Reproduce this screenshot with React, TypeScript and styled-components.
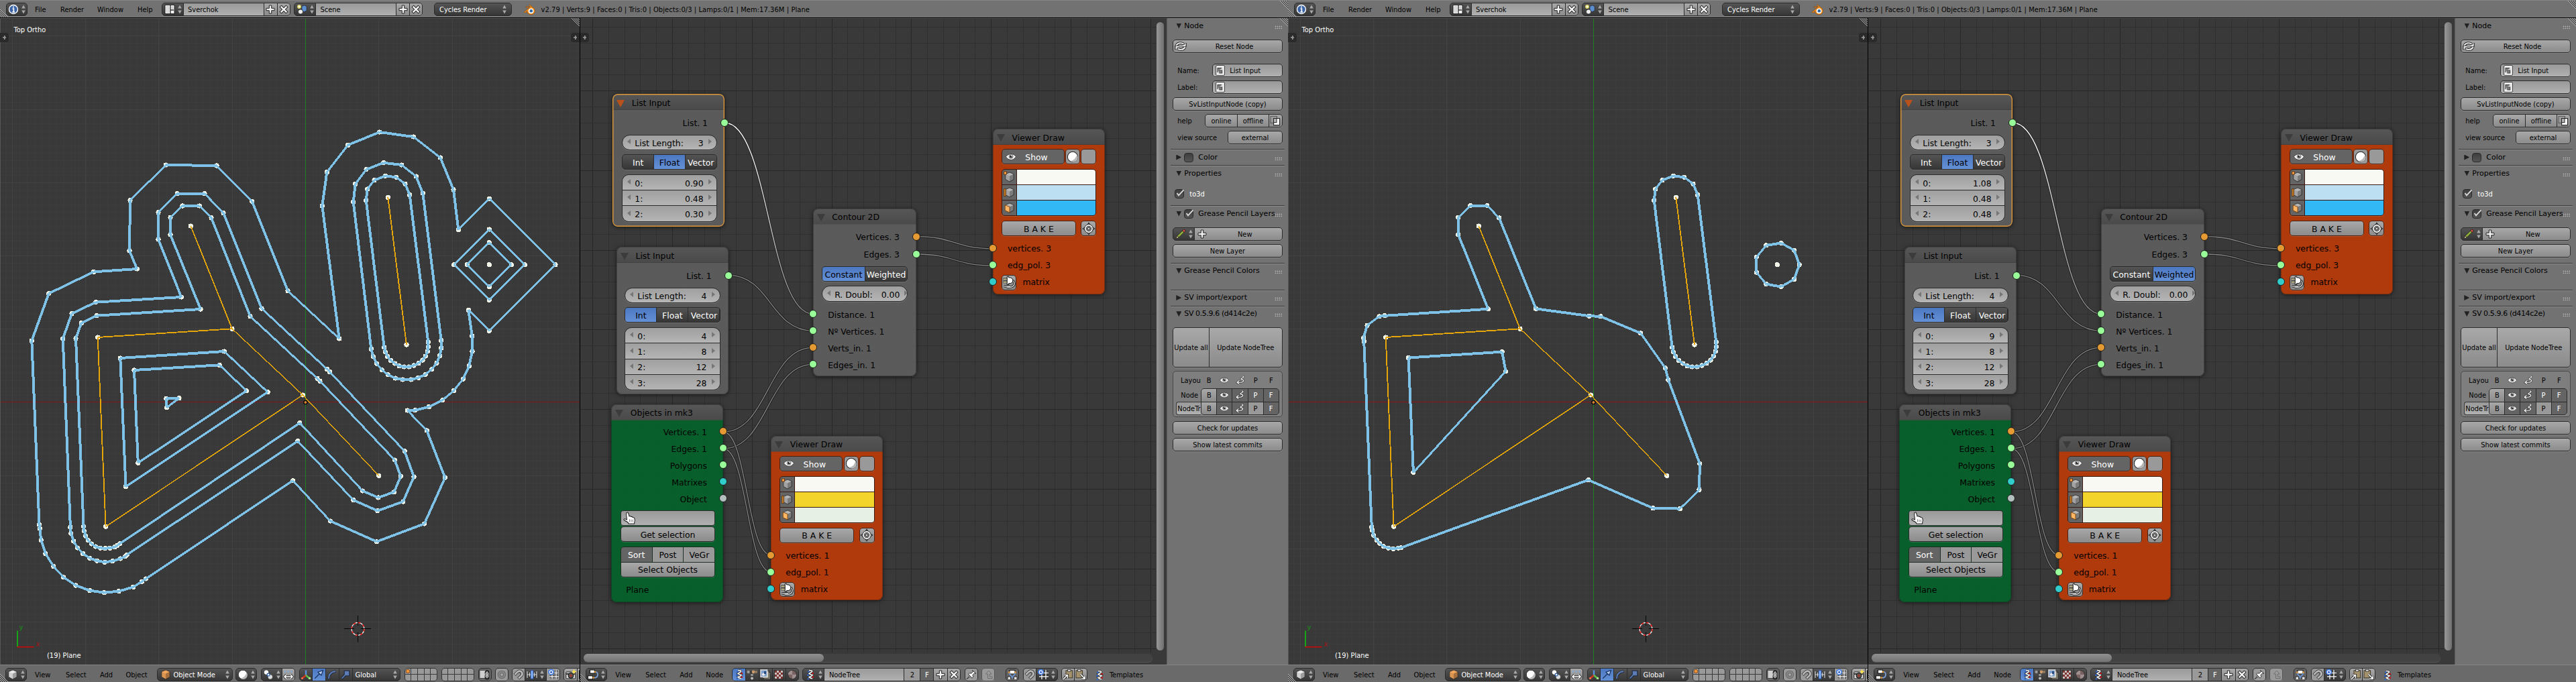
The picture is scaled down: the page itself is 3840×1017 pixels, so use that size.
import React from "react";
import styled, { createGlobalStyle, css } from "styled-components";

/* ---------- theme ---------- */

const shade = {
  dark: "linear-gradient(#545454, #363636)",
  tool: "linear-gradient(#a8a8a8, #8b8b8b)",
  flat: "#999999",
  field: "linear-gradient(#999999, #b1b1b1)",
  pressed: "#646464",
  active: "linear-gradient(#4c78c2, #6490d6)",
};
type Tone = keyof typeof shade;
const lightText = (t: Tone) => t === "dark" || t === "pressed";

const GlobalStyle = createGlobalStyle`
  * { box-sizing: border-box; }
  body { margin: 0; background: #393939; overflow: hidden; }
`;

const uiFont = css`
  font-family: "DejaVu Sans Condensed", "DejaVu Sans", sans-serif;
  font-stretch: condensed;
  font-size: 11px;
  line-height: 14px;
  white-space: pre;
`;

const Page = styled.div`
  display: flex;
  width: 3840px;
  height: 1017px;
`;
const Screen = styled.section`
  display: flex;
  flex-direction: column;
  width: 1920px;
  height: 1017px;
  color: #000;
  overflow: hidden;
  ${uiFont}
`;
const Main = styled.div`
  display: flex;
  flex: 1;
  min-height: 0;
`;
const Column = styled.div<{ $w: number }>`
  display: flex;
  flex-direction: column;
  width: ${(p) => p.$w}px;
  flex: none;
`;
const Split = styled.div`
  width: 1px;
  flex: none;
  background: #000;
`;

/* ---------- bars and widgets ---------- */

const Bar = styled.header<{ $top?: boolean; $pad: number }>`
  position: relative;
  display: flex;
  align-items: center;
  flex: none;
  height: ${(p) => (p.$top ? 27 : 26)}px;
  padding: ${(p) => (p.$top ? "1px" : "2px")} 0 0 ${(p) => p.$pad}px;
  background: ${(p) => (p.$top ? "#727272" : "#6a6a6a")};
  border-top: 1px solid #858585;
  border-bottom: ${(p) => (p.$top ? "1px solid #000" : "0")};
  overflow: hidden;
`;
const Item = styled.span<{ $w?: number; $ml?: number }>`
  flex: none;
  width: ${(p) => (p.$w ? p.$w + "px" : "auto")};
  margin-left: ${(p) => p.$ml || 0}px;
  padding-top: 2px;
`;
const Stats = styled(Item)`
  letter-spacing: 0.09px;
`;
const Group = styled.div<{ $ml?: number; $mt?: number; $h?: number; $r?: number; $edge?: string }>`
  display: flex;
  flex: none;
  height: ${(p) => p.$h || 20}px;
  margin-left: ${(p) => p.$ml || 0}px;
  margin-top: ${(p) => p.$mt || 0}px;
  border: 1px solid ${(p) => p.$edge || "#2c2c2c"};
  border-radius: ${(p) => p.$r || 5}px;
  background: ${(p) => p.$edge || "#2c2c2c"};
  box-shadow: 0 1px 0 rgba(255, 255, 255, 0.13);
  overflow: hidden;
  gap: 1px;
`;
const Cell = styled.div<{ $tone?: Tone; $w?: number; $left?: boolean; $px?: number }>`
  display: flex;
  align-items: center;
  justify-content: ${(p) => (p.$left ? "flex-start" : "center")};
  gap: 4px;
  flex: ${(p) => (p.$w ? "none" : "1")};
  width: ${(p) => (p.$w ? p.$w + "px" : "auto")};
  min-width: 0;
  padding: 0 ${(p) => p.$px || 0}px;
  background: ${(p) => shade[p.$tone || "tool"]};
  color: ${(p) => (lightText(p.$tone || "tool") ? "#fff" : "#000")};
  overflow: hidden;
`;
const Label = styled.span`
  padding-top: 2px;
`;
const Push = styled.span`
  flex: 1;
`;

/* ---------- icons ---------- */

const Svg = styled.svg`
  display: block;
  flex: none;
  overflow: visible;
`;
const I: React.FC<{ children: React.ReactNode; w?: number; s?: number }> = ({ children, w = 16, s = 16 }) => (
  <Svg width={(s * w) / 16} height={s} viewBox={`0 0 ${w} 16`}>
    {children}
  </Svg>
);
const UpDown = () => (
  <Svg width="6" height="14" viewBox="0 0 6 14">
    <path d="M3 0.5L5.8 5.5H0.2Z M3 13.5L0.2 8.5H5.8Z" fill="#a9a9a9" />
  </Svg>
);
const Info = () => (
  <I>
    <circle cx="8" cy="8" r="6.5" fill="#3c64a8" stroke="#fff" strokeWidth="1.4" />
    <path d="M8 3.6v1.9M6.6 7H8.4V11.6M6.4 11.8H10" stroke="#fff" strokeWidth="1.7" fill="none" />
  </I>
);
const ScreenIcon = () => (
  <I>
    <rect x="1" y="1.5" width="14" height="13" fill="#fff" stroke="#222" />
    <path d="M9 2V14M9.5 9H14" stroke="#333" strokeWidth="1.4" />
    <path d="M3 3.5H7V12.5H3ZM10.8 3.5H13V7.2H10.8Z" fill="#ddd" stroke="#aaa" strokeWidth=".5" />
  </I>
);
const Plus = () => (
  <I>
    <path d="M6.3 2H9.7V6.3H14V9.7H9.7V14H6.3V9.7H2V6.3H6.3Z" fill="#f2f2f2" stroke="#222" strokeWidth="1" />
  </I>
);
const Cross = () => (
  <I>
    <path d="M3 3L13 13M13 3L3 13" stroke="#222" strokeWidth="4.4" />
    <path d="M3.6 3.6L12.4 12.4M12.4 3.6L3.6 12.4" stroke="#f2f2f2" strokeWidth="2.4" />
  </I>
);
const SceneIcon = () => (
  <I>
    <circle cx="4" cy="4" r="3" fill="#f5ee6a" opacity=".85" />
    <circle cx="4" cy="4" r="1.4" fill="#fff" />
    <path d="M8 3.5L11.5 2L15 3.5V10L11.5 11.5L8 10Z" fill="#5b8fd0" stroke="#223" strokeWidth=".6" />
    <circle cx="6" cy="11.5" r="3.6" fill="#eee" stroke="#222" strokeWidth=".8" />
  </I>
);
const Blender = () => (
  <I w={18}>
    <path d="M1 11L9.5 4.2H4V2.9H10.6L8.4 1L9.6 0L16.4 5.8Q18 8 17.4 10.4Q16 14.6 11.4 14.8Q6 14.4 5.6 9.7L2.4 12.4Z" fill="#f08a1d" stroke="#6b3a08" strokeWidth=".5" />
    <circle cx="11.6" cy="9.3" r="3.9" fill="#fff" />
    <circle cx="11.8" cy="9.3" r="2.3" fill="#2c64a8" />
  </I>
);
const Cube: React.FC<{ c?: string; mode?: "v" | "e" | "f" }> = ({ c = "#e9e9e9", mode }) => (
  <I>
    <path d="M8 1L14.2 3.6V11.5L8 15L1.8 11.5V3.6Z" fill={c} stroke="#2a2a2a" strokeWidth=".8" />
    <path d="M8 6.4L14.2 3.6V11.5L8 15Z" fill="rgba(0,0,0,.32)" />
    <path d="M1.8 3.6L8 6.4V15L1.8 11.5Z" fill="rgba(0,0,0,.1)" />
    {mode === "v" && <rect x="-.5" y="0" width="4" height="4" fill="#f5a04a" stroke="#6b3505" strokeWidth=".9" />}
    {mode === "e" && <path d="M-.4 2.6H2.4V13.6H-.4Z" fill="#c9822f" stroke="#5c3008" strokeWidth=".8" />}
    {mode === "f" && <path d="M1.2 3.8L8 6.4V15L1.2 11.8Z" fill="#ffb766" stroke="#7a4208" strokeWidth=".9" />}
  </I>
);
const Ball: React.FC<{ s?: number }> = ({ s = 16 }) => (
  <I s={s}>
    <circle cx="8" cy="8" r="6.8" fill="#fff" stroke="#222" strokeWidth=".9" />
    <path d="M13.6 4.6A6.4 6.4 0 0 1 4.4 13.4Q11.6 13 13.6 4.6Z" fill="#b9b9b9" />
  </I>
);
const Pivot = () => (
  <I>
    <circle cx="5" cy="4.6" r="3.8" fill="#fff" stroke="#222" strokeWidth=".8" />
    <circle cx="10.8" cy="11.4" r="3.8" fill="#ddd" stroke="#222" strokeWidth=".8" />
    <rect x="6.4" y="6.4" width="3.4" height="3.4" fill="#fff" stroke="#2b62b8" strokeWidth="1.1" />
  </I>
);
const Spread = () => (
  <I>
    <path d="M2 3.5H14" stroke="#7da9de" strokeWidth="2.2" strokeDasharray="2.4 2.2" />
    <path d="M2 11H14M5 8L2 11L5 14M11 8L14 11L11 14" stroke="#333" strokeWidth="3.4" fill="none" />
    <path d="M2 11H14M5 8L2 11L5 14M11 8L14 11L11 14" stroke="#fff" strokeWidth="1.5" fill="none" />
  </I>
);
const Tripod = () => (
  <I>
    <path d="M8 9V1.5" stroke="#5b8fe0" strokeWidth="2.4" />
    <path d="M8 9L2 14" stroke="#d6321c" strokeWidth="2.4" />
    <path d="M8 9L14 14" stroke="#5fc04a" strokeWidth="2.4" />
    <circle cx="2.4" cy="13.4" r="1.6" fill="#f06a50" />
    <circle cx="13.6" cy="13.4" r="1.6" fill="#b6f0a0" />
  </I>
);
const Move = () => (
  <I>
    <path d="M2.2 13.8L9.4 6.8L7 4.2L14.4 1.6L12 9L9.6 6.8" fill="#b5cdf2" stroke="#15305f" strokeWidth="1.2" />
  </I>
);
const Rotate = () => (
  <I>
    <path d="M3 14.5Q2.8 4.4 13.6 3" fill="none" stroke="#1c2a44" strokeWidth="3.6" />
    <path d="M3 14Q2.8 4.4 13.2 3" fill="none" stroke="#5d7cb4" strokeWidth="1.8" />
  </I>
);
const Scale = () => (
  <I>
    <path d="M2.4 14L8 8" stroke="#1c2a44" strokeWidth="3.4" />
    <rect x="6.2" y="2.2" width="7.6" height="7.6" fill="#5d7cb4" stroke="#1c2a44" strokeWidth="1.1" />
    <path d="M2.6 13.6L8 8" stroke="#5d7cb4" strokeWidth="1.6" />
  </I>
);
const LockScene = () => (
  <I>
    <rect x="0" y="1.5" width="12" height="12" fill="#cfcfcf" stroke="#333" strokeWidth=".8" />
    <rect x="8.8" y="2.6" width="4.6" height="5.6" rx="2.2" fill="none" stroke="#222" strokeWidth="2.4" />
    <rect x="8.8" y="8.6" width="4.6" height="5.6" rx="2.2" fill="none" stroke="#222" strokeWidth="2.6" />
    <path d="M11.1 3v10.4M8.9 5v1.6a2.2 2.2 0 0 0 4.4 0V5M8.9 12v-1.4a2.2 2.2 0 0 1 4.4 0V12" fill="none" stroke="#eee" strokeWidth=".9" />
  </I>
);
const Ring = () => (
  <I>
    <circle cx="8" cy="8" r="5.6" fill="#8c8c8c" stroke="#707070" strokeWidth="1.4" />
    <circle cx="8" cy="8" r="2.6" fill="#a5a5a5" stroke="#6c6c6c" strokeWidth="1.2" />
  </I>
);
const Magnet = () => (
  <I>
    <path d="M2 8.4L7 3.6Q10 1.4 12.6 4.2Q14.8 7 12.2 9.6L7.6 14" fill="none" stroke="#3d3d3d" strokeWidth="4.4" />
    <path d="M2.4 8L7 3.6Q10 1.4 12.6 4.2Q14.8 7 12.2 9.6L8 13.6" fill="none" stroke="#b9b9b9" strokeWidth="2.6" />
    <path d="M5 7.6Q8.6 3.6 10.4 6Q11.6 7.4 9.6 9.2L6.4 12.4" fill="none" stroke="#555" strokeWidth="1" />
  </I>
);
const Increment = () => (
  <I>
    <path d="M1 3V13M4.6 5V11M11.4 5V11M15 3V13M1 8H15" stroke="#d8d8d8" strokeWidth="1.1" />
    <rect x="6.6" y="2" width="3" height="12" fill="#9cc4ff" stroke="#2d6ad0" strokeWidth="1" />
  </I>
);
const GridSnap = () => (
  <I>
    <path d="M6 1V15M12 1V15M2 5.6H16M2 11H16" stroke="#222" strokeWidth="3.2" />
    <path d="M6 1V15M12 1V15M2 5.6H16M2 11H16" stroke="#f0f0f0" strokeWidth="1.5" />
    <circle cx="4.6" cy="4.2" r="3.6" fill="#fff" stroke="#3c7cf0" strokeWidth="1.6" />
    <circle cx="4.6" cy="4.2" r="1.5" fill="#2450c0" />
  </I>
);
const Camera = () => (
  <I>
    <rect x="0.8" y="4" width="14" height="10" rx="1" fill="#d9d9d9" stroke="#222" />
    <path d="M1 6H15V8H1Z" fill="#333" />
    <circle cx="8" cy="9.4" r="4" fill="#555" stroke="#111" />
    <circle cx="8" cy="9.6" r="2" fill="#a03a2a" />
    <path d="M12.6 0L13.8 2.6L16.6 3.6L13.8 4.8L12.6 7.4L11.4 4.8L8.8 3.6L11.4 2.6Z" fill="#ffe14a" />
  </I>
);
const ClapperEdge = () => (
  <I>
    <rect x="0.6" y="2" width="14" height="12" fill="#3f6ea8" stroke="#111" />
    <path d="M1 5H14" stroke="#fff" strokeWidth="2" strokeDasharray="2 2" />
  </I>
);
const NodesIcon = () => (
  <I>
    <path d="M9 4H11.5Q15 4 15 8T11.5 12.6H8" fill="none" stroke="#7fa4dc" strokeWidth="1.7" />
    <rect x="3.4" y="1" width="7" height="5" fill="#fff" stroke="#111" />
    <rect x="0.4" y="9.8" width="7" height="5" fill="#fff" stroke="#111" />
    <circle cx="11" cy="4" r="1.3" fill="#e89a2a" />
    <circle cx="8.6" cy="12.6" r="1.3" fill="#e89a2a" />
  </I>
);
const Snake: React.FC<{ s?: number }> = ({ s = 16 }) => (
  <I s={s}>
    <path d="M4 3.6H7M3 8.8H6M3.6 14.4H6" stroke="#2f63c0" strokeWidth="2.4" />
    <path d="M10 6.4H13M9.4 11.8H13" stroke="#c41414" strokeWidth="2.6" />
    <path d="M6 1.6Q11.6 1.4 10.4 3.6Q8 5.4 6 6.4Q8.4 8.6 11.2 8.6Q10 10.6 6.2 11.6Q7.8 13.4 11 13.8" fill="none" stroke="#222" strokeWidth="3" />
    <path d="M6 1.6Q11.6 1.4 10.4 3.6Q8 5.4 6 6.4Q8.4 8.6 11.2 8.6Q10 10.6 6.2 11.6Q7.8 13.4 11 13.8" fill="none" stroke="#f2f2f2" strokeWidth="1.7" />
  </I>
);
const DotTree = () => (
  <I>
    <path d="M3 4H13M8 5V13" stroke="#2a2a2a" strokeWidth="1.4" />
    <circle cx="2.6" cy="4" r="2.2" fill="#9a9a9a" />
    <circle cx="10" cy="4" r="2.4" fill="#c99a6c" />
    <circle cx="14" cy="4" r="1.8" fill="#a98462" />
    <circle cx="8" cy="8.6" r="1.8" fill="#9a9a9a" />
    <circle cx="8" cy="13.4" r="2" fill="#bcbcbc" />
  </I>
);
const Composite = () => (
  <I>
    <rect x="5.6" y="4.6" width="9.4" height="10.4" fill="#a7a58e" stroke="#222" strokeWidth=".8" />
    <rect x="3.6" y="2.8" width="9.4" height="10.4" fill="#c4c2ac" stroke="#222" strokeWidth=".8" />
    <rect x="1" y="1" width="9.6" height="10.4" fill="#7da0cc" stroke="#ddd" strokeWidth="1.4" />
    <circle cx="5" cy="7.8" r="2" fill="#eee" />
    <rect x="6" y="3" width="3" height="4" fill="#2c4c80" />
  </I>
);
const Checker = () => (
  <I>
    <rect x="1.4" y="1.4" width="13.2" height="13.2" fill="#c9bcbc" stroke="#222" strokeWidth=".8" />
    {[0, 1, 2, 3].map((r) =>
      [0, 1].map((c) => <rect key={r + "-" + c} x={2 + (c * 2 + (r % 2)) * 3} y={2 + r * 3} width="3" height="3" fill="#7d3430" />)
    )}
  </I>
);
const MatBall = () => (
  <I>
    <circle cx="8" cy="8" r="6.4" fill="#7a6260" stroke="#222" strokeWidth=".8" />
    <path d="M8 1.8A6.2 6.2 0 0 0 1.8 8H8ZM8 8H14.2A6.2 6.2 0 0 1 8 14.2Z" fill="#a79a98" opacity=".8" />
  </I>
);
const Pin = () => (
  <I>
    <path d="M1.2 14.6L5.8 9.2L3.4 7.6L5.2 5.8L8 6.2L10.4 3.6L9.6 1.6L14.8 6.2L12.6 5.8L10 8.6L10.6 11.4L8.8 13.2L6.8 10.4Z" fill="#fff" stroke="#222" strokeWidth=".9" />
  </I>
);
const Parent = () => (
  <I>
    <path d="M14 13.6H7.6V7H4.6L8.8 2.2L13 7H10.2V11H14Z" fill="#a0a0a0" stroke="#676767" strokeWidth=".9" />
  </I>
);
const Figure = () => (
  <I>
    <rect x="4" y="1.4" width="8" height="5.6" fill="#fff" stroke="#111" />
    <path d="M3 5.4L8 12.6L13 5.4" fill="none" stroke="#6d95d8" strokeWidth="1.7" />
    <path d="M1 15V11H5.6V15M10.4 15V11H15V15" fill="#ddd" stroke="#111" strokeWidth=".8" />
    <circle cx="3.2" cy="4.6" r="1.3" fill="#e89a2a" />
    <circle cx="12.8" cy="4.6" r="1.3" fill="#e89a2a" />
  </I>
);
const Clip: React.FC<{ out?: boolean }> = ({ out }) => {
  const arrow = out ? "M7.6 7.4L13.8 13.6M14.2 9.4V14.2H9.2" : "M1.2 14.6L6.8 9M2.4 8.6H7.4V13.6";
  return (
    <I>
      <rect x={out ? 1 : 5} y="1.8" width="9.6" height="11" fill="#a3926c" stroke="#3a3222" strokeWidth=".9" />
      <rect x={out ? 3.6 : 7.6} y="0.4" width="4.4" height="2.8" fill="#ddd" stroke="#222" strokeWidth=".7" />
      <path d={arrow} fill="none" stroke="#222" strokeWidth="3.2" />
      <path d={arrow} fill="none" stroke="#fff" strokeWidth="1.5" />
    </I>
  );
};
const Eye: React.FC<{ s?: number }> = ({ s = 16 }) => (
  <I s={s}>
    <path d="M0.2 7.6Q8 -0.6 15.8 7.6Q11.6 13 8 12.6Q3.6 12.4 0.2 7.6Z" fill="#f6f6f6" stroke="#2a2a2a" strokeWidth=".8" />
    <circle cx="8.1" cy="7.4" r="3" fill="#a8a8a8" stroke="#666" strokeWidth=".7" />
    <circle cx="8.1" cy="7.4" r="1.7" fill="#111" />
    <circle cx="9.1" cy="6.4" r=".9" fill="#fff" />
  </I>
);
const Squiggle = () => (
  <I s={14}>
    <path d="M12 1.2Q15.6 2 11.4 4.2Q6 6.4 12.6 7.4Q15.4 9.4 9.8 11.6L3 11.8M6 8.6L2.4 11.8L6 14.6" fill="none" stroke="#2a2a2a" strokeWidth="3" />
    <path d="M12 1.2Q15.6 2 11.4 4.2Q6 6.4 12.6 7.4Q15.4 9.4 9.8 11.6L3 11.8M6 8.6L2.4 11.8L6 14.6" fill="none" stroke="#f0f0f0" strokeWidth="1.6" />
  </I>
);
const Target = () => (
  <I s={18}>
    <path d="M8 .2L9.4 2.4L8 3.6L6.6 2.4ZM8 15.8L9.4 13.6L8 12.4L6.6 13.6ZM.2 8L2.4 6.6L3.6 8L2.4 9.4ZM15.8 8L13.6 6.6L12.4 8L13.6 9.4Z" fill="#fff" stroke="#222" strokeWidth=".9" />
    <circle cx="8" cy="8" r="4.5" fill="#a8a8a8" stroke="#222" strokeWidth="2.9" />
    <circle cx="8" cy="8" r="4.5" fill="none" stroke="#fff" strokeWidth="1.5" />
    <circle cx="8" cy="8" r="1.8" fill="#ddd" stroke="#222" strokeWidth=".9" />
  </I>
);
const Plug = () => (
  <I s={20}>
    <path d="M1 4.2H6M1 7.6H6" stroke="#222" strokeWidth="2.8" />
    <path d="M1.2 4.2H6M1.2 7.6H6" stroke="#e0d9a4" strokeWidth="1.4" />
    <path d="M12.6 6Q15.4 8 14 11.4Q12 14.4 5.4 14M2 12.6H9.4" fill="none" stroke="#222" strokeWidth="2.8" />
    <path d="M12.6 6Q15.4 8 14 11.4Q12 14.4 5.4 14M2 12.6H9.4" fill="none" stroke="#c9c9c9" strokeWidth="1.2" />
    <path d="M5.8 1H7.6V2.2Q12.6 2.2 12.6 6Q12.6 9.6 7.6 9.4V10.8H5.8Z" fill="#fff" stroke="#111" strokeWidth=".8" />
  </I>
);
const Hand = () => (
  <I s={19}>
    <path d="M4.4 1.2Q5.8 .2 6.4 1.8L7.6 5.8Q9 5 9.8 6.4Q11.4 5.8 12 7.2Q13.6 7 14.2 8.4Q15.2 11.4 14.2 13L14 15.2H6.6L6 13.4L1 10.6Q.2 8.8 2 9L4.6 10L3.8 3Z" fill="#fff" stroke="#222" strokeWidth=".9" />
    <path d="M8 9.6V13M10 9.8V13M12 10V13" stroke="#777" strokeWidth=".8" />
  </I>
);
const Refresh = () => (
  <I>
    <path d="M1.4 6.6Q5 1.2 12 4.2M14.6 9.4Q11 14.8 4 11.8M10.6 7.4H14.8V3M5.4 8.6H1.2V13" fill="none" stroke="#222" strokeWidth="3.8" />
    <path d="M1.4 6.6Q5 1.2 12 4.2M14.6 9.4Q11 14.8 4 11.8M10.6 7.2H14.6V3.4M5.4 8.8H1.4V12.6" fill="none" stroke="#f2f2f2" strokeWidth="1.9" />
  </I>
);
const NodeField = () => (
  <Svg width="14" height="16" viewBox="0 0 14 16">
    <rect x=".7" y=".7" width="12.6" height="14.6" rx="1" fill="#fff" stroke="#222" strokeWidth=".9" />
    <rect x="2.6" y="3" width="8.8" height="10" fill="#ddd" />
    <path d="M3 11V4.6H9M6 8H9.6V12H6Z" fill="#888" stroke="#444" strokeWidth="1.1" />
  </Svg>
);
const Copy = () => (
  <I>
    <rect x="1" y="1.4" width="9.4" height="10" fill="#9c9c9c" stroke="#555" />
    <rect x="5.6" y="4.6" width="9" height="10" fill="#fff" stroke="#222" strokeWidth="1.1" />
    <rect x="5.6" y="4.6" width="4.4" height="6" fill="#bbb" stroke="#222" />
  </I>
);
const Pencil = () => (
  <I>
    <path d="M1 15L3 10.6L5.4 13Z" fill="#eee0b0" stroke="#111" strokeWidth=".6" />
    <path d="M3 10.6L10.6 3L13 5.4L5.4 13Z" fill="#8fae3e" stroke="#111" strokeWidth=".7" />
    <path d="M10.6 3L12.4 1.2Q15.6 1.2 14.8 3.8L13 5.4Z" fill="#e05048" stroke="#111" strokeWidth=".6" />
  </I>
);

/* ---------- area corner and region tabs ---------- */

const Corner = styled.svg<{ $at: "bl" | "tr" }>`
  position: absolute;
  width: 13px;
  height: 13px;
  ${(p) => (p.$at === "bl" ? "left: 0; bottom: 0;" : "right: 0; top: 0;")}
`;
const Hatch: React.FC<{ at: "bl" | "tr" }> = ({ at }) => (
  <Corner $at={at} viewBox="0 0 13 13">
    {[0, 3, 6, 9].map((d) => (
      <g key={d}>
        <path d={at === "bl" ? `M0 ${1 + d}L${12 - d} 13` : `M${1 + d} 0L13 ${12 - d}`} stroke="#c0c0c0" strokeWidth="1" />
        <path d={at === "bl" ? `M0 ${2.2 + d}L${10.8 - d} 13` : `M${2.2 + d} 0L13 ${10.8 - d}`} stroke="#222" strokeWidth=".9" />
      </g>
    ))}
  </Corner>
);
const RegionTab = styled.div<{ $side: "l" | "r" }>`
  position: absolute;
  top: 22px;
  ${(p) => (p.$side === "l" ? "left: 0; border-radius: 0 4px 4px 0;" : "right: 0; border-radius: 4px 0 0 4px;")}
  width: 13px;
  height: 14px;
  background:
    linear-gradient(#989898, #989898) center / 5px 1.6px no-repeat,
    linear-gradient(#989898, #989898) center / 1.6px 6px no-repeat,
    #2a2a2a;
`;

/* ---------- 3D view ---------- */

type Pt = [number, number];
const pts = (s: string): Pt[] => s.split(" ").map((p) => p.split(",").map(Number) as unknown as Pt);

const capsuleInner = pts(
  "545.7,298.7 547.7,282 558,268.7 574.3,262.3 590.7,264.3 604,274.3 610.7,290.7 638.3,510 638.3,517.3 637.3,524 634.3,531 630,537 624,541.7 617,545 609.7,547 602.3,547 595,545.7 588.7,542 582.3,537.3 577.7,531.7 574.3,524.7 572.7,518"
);
const constantLoops: Pt[][] = [
  pts(
    "47.3,508 72.7,437.7 139.7,405.3 204.3,401 193,374 194,298.7 247.3,246 323,247 375.7,300.3 429,433.7 505.7,505 480.3,307 487.3,256.7 518.7,216.3 565.7,197 616.3,204 656.3,235 676,282.7 683.3,342.7 729.3,296.3 828,394.7 729.3,493.3 698.3,462.3 703.7,501 704,524 699.3,545.7 690.3,565.3 676.3,582.7 659.7,596.7 639.3,606.7 618.7,611.7 607.3,612 636.2,642 663.4,712.3 632.6,781 561.6,807.7 492.4,777 436.6,716.7 217.4,863 211.6,867.3 198.7,875.3 177.2,881.7 155.4,883.7 133.9,880.7 113,873 94.6,860.7 79.9,844.7 67.9,825.7 61.2,805.3 59.4,788.3 58.5,782.3"
  ),
  pts(
    "93.7,505 107,467.7 142.7,450.7 270.3,443 236,357 236,316.7 264.3,288.7 305,288.7 333,317.7 390,460 487.3,550.3 491.3,554.3 603.1,672.7 617,711 600.9,748 562.9,761.7 526.8,745.7 443.8,657.7 189.3,827.3 186.6,829.7 179.5,833 167.9,836.7 156.3,838.3 144.6,836.3 133.9,832.3 123.7,825.7 115.6,817 109.8,807 105.8,795.3 104.9,786"
  ),
  pts(
    "113,504.7 121.3,481.7 144,470.7 299,461 254,350 254,324.3 272,307 297.3,307 315,324.7 373,471.7 473,564.3 477,568.3 588.4,686 597.3,710.3 587.5,733.7 563.8,742 540.6,732 446.9,630.7 178.6,810.7 175,813.3 171,815.7 163.8,817.3 156.7,817.7 149.6,817.3 142.4,815 136.6,811 131.3,805.7 127.7,799.3 125.4,791.7 124.6,785"
  ),
  pts("179.3,534 334.3,524 399.1,584.7 187.5,725.7"),
  pts("200,552 327.2,544.3 367.4,582.7 205.8,690.3"),
  pts("247.8,594.3 267,593.7 248.7,607.7"),
  pts(
    "526.7,301.3 529.7,274.3 546,252.7 571.7,242.7 598.7,246 620.3,263 630.3,288 657.7,507.7 657.7,519 655.7,530.3 651,541.3 643.7,550.7 634.3,558.3 623.7,563.3 612.7,566 600.3,566 589.3,564 578.3,558.7 569.3,551.7 561.7,542.3 556.3,531.7 553.3,520.3"
  ),
  capsuleInner,
  pts("676.7,394.7 729.3,342 782.3,394.7 729.3,447.3"),
  pts("696.3,394.7 729.3,361.7 762.3,394.7 729.3,427.7"),
];
const weightedLoops: Pt[][] = [
  pts(
    "253.8,324.2 271.7,306.6 296.9,306.6 314.8,325 369.6,460.4 449.1,471.2 466.1,471.9 525.7,496.8 562.5,548.8 566.9,566.4 613.9,691.6 613,730.2 584.4,758.6 544.1,757.8 447.7,715.7 168.5,816.7 164.6,817.1 156.8,818.3 149.5,817.1 142.3,814.8 136.9,810.6 132.1,805.3 127.7,798.4 125.8,791.1 124.8,786.1 113.2,509 112.7,503.7 118,485.3 136,471.9 144.2,470.8 298.4,460.8 253.8,349.8"
  ),
  pts("179.6,533.5 319.2,524.7 324.5,553.8 186.9,704.6"),
  capsuleInner,
  pts("712.8,365.9 735.1,362.5 754.5,373.2 762.3,394.6 754.5,416.4 735.1,427.5 712.8,423.7 698.3,406.1 698.3,383.5"),
];
const source = pts("284.3,337 346,490.3 145.7,503 157.6,785.3 451.3,589 564.7,709.3 578.3,294.3 606,514 729.3,394.7");
const sourceEdges: Pt[] = [[0, 1], [1, 2], [2, 3], [3, 4], [1, 4], [4, 5], [6, 7]];

/* wide GL lines keep their width along the minor axis, so slanted ones look thinner */
const Seg: React.FC<{ a: Pt; b: Pt; w: number; c: string }> = ({ a, b, w, c }) => {
  const dx = Math.abs(a[0] - b[0]);
  const dy = Math.abs(a[1] - b[1]);
  const k = Math.max(dx, dy) / Math.hypot(dx, dy);
  return <line x1={a[0]} y1={a[1]} x2={b[0]} y2={b[1]} stroke={c} strokeWidth={w * k} />;
};
const Dots: React.FC<{ list: Pt[] }> = ({ list }) => (
  <>
    {list.map((p, i) => (
      <circle key={i} cx={p[0]} cy={p[1]} r="3.6" fill="#f2f3e7" />
    ))}
  </>
);
const range = (from: number, to: number, step: number) => {
  const out: number[] = [];
  for (let v = from; v < to; v += step) out.push(v);
  return out;
};
const View = styled.div`
  position: relative;
  flex: 1;
  background: #393939;
  box-shadow: inset 1px 1px 0 #565656;
`;
const Scene3D = styled.svg`
  display: block;
  width: 864px;
  height: 964px;
`;

const View3D: React.FC<{ weighted: boolean }> = ({ weighted }) => {
  const loops = weighted ? weightedLoops : constantLoops;
  return (
    <View>
      <Scene3D viewBox="0 27 864 964">
        <g shapeRendering="crispEdges">
          {range(7.5, 864, 10.92).map((x) => <rect key={"a" + x} x={Math.round(x)} y="28" width="1" height="963" fill="#3c3c3c" />)}
          {range(31.6, 991, 10.92).map((y) => <rect key={"b" + y} x="1" y={Math.round(y)} width="863" height="1" fill="#3c3c3c" />)}
          {[18, 127, 236, 346, 564, 674, 783].map((x) => <rect key={x} x={x} y="28" width="1" height="963" fill="#424242" />)}
          {[53, 163, 272, 381, 490, 709, 818, 927].map((y) => <rect key={y} x="1" y={y} width="863" height="1" fill="#424242" />)}
          <rect x="1" y="599" width="863" height="1" fill={weighted ? "#901416" : "#821719"} />
          <rect x="455" y="28" width="1" height="963" fill="#228022" />
          <Dots list={source} />
          {loops.map((l, i) => <Dots key={i} list={l} />)}
          {sourceEdges.map(([a, b], i) => <Seg key={i} a={source[a]} b={source[b]} w={1.9} c="#e6a608" />)}
          {loops.map((l, i) => l.map((p, j) => <Seg key={i + "-" + j} a={p} b={l[(j + 1) % l.length]} w={4} c="#7ec2e8" />))}
        </g>
        <circle cx="455.4" cy="600" r="2.6" fill="#cf8436" stroke="#000" strokeWidth="1.2" />
        <circle cx="533.5" cy="937.8" r="9.5" fill="none" stroke="#fff" strokeWidth="1.2" />
        <circle cx="533.5" cy="937.8" r="9.5" fill="none" stroke="#f00" strokeWidth="1.3" strokeDasharray="3.73 3.73" />
        <path d="M533.5 918V933M533.5 943V957.6M513 937.5H528M538 937.5H553" stroke="#000" strokeWidth="1" />
        <path d="M26 940.5V965" stroke="#10c010" strokeWidth="1.6" />
        <path d="M25.4 964.7H50.5" stroke="#c80a0a" strokeWidth="1.6" />
        <text x="28.4" y="939" fill="#189018" fontSize="11">y</text>
        <text x="53.6" y="963.5" fill="#a01414" fontSize="11">x</text>
        <text x="20.5" y="48.3" fill="#fff">Top Ortho</text>
        <text x="70" y="981" fill="#fff">(19) Plane</text>
      </Scene3D>
      <RegionTab $side="l" />
      <RegionTab $side="r" />
      <Hatch at="tr" />
    </View>
  );
};

const LayerGrid = styled.div<{ $ml: number }>`
  display: grid;
  grid-template: repeat(2, 1fr) / repeat(5, 1fr);
  gap: 1px;
  flex: none;
  width: 49.5px;
  height: 20px;
  margin-left: ${(p) => p.$ml}px;
  background: #3a3a3a;
  border: 1px solid #333;
  border-radius: 5px;
  overflow: hidden;
`;
const Layer = styled.i<{ $on?: boolean }>`
  background: ${(p) => (p.$on ? "radial-gradient(circle at 4px 4px, #f0943c 0 2px, #6b3a10 2.8px, #999 3.4px)" : "#999")};
`;
const Layers: React.FC<{ on?: boolean; ml: number }> = ({ on, ml }) => (
  <LayerGrid $ml={ml}>
    {range(0, 10, 1).map((i) => <Layer key={i} $on={on && i === 0} />)}
  </LayerGrid>
);

const Header3D = () => (
  <Bar $pad={8}>
    <Group><Cell $tone="dark" $w={30}><Cube /><UpDown /></Cell></Group>
    <Item $ml={12} $w={46}>View</Item>
    <Item $w={51}>Select</Item>
    <Item $w={38.5}>Add</Item>
    <Item $w={46}>Object</Item>
    <Group>
      <Cell $tone="dark" $w={111} $left $px={4}><Cube c="#f3a65c" /><Label>Object Mode</Label><Push /><UpDown /></Cell>
    </Group>
    <Group $ml={4.5}><Cell $tone="dark" $w={30}><Ball /><UpDown /></Cell></Group>
    <Group $ml={5.5}><Cell $tone="dark" $w={30}><Pivot /><UpDown /></Cell><Cell $w={18}><Spread /></Cell></Group>
    <Group $ml={6}>
      <Cell $tone="dark" $w={18}><Tripod /></Cell>
      <Cell $tone="active" $w={19}><Move /></Cell>
      <Cell $tone="dark" $w={19}><Rotate /></Cell>
      <Cell $tone="dark" $w={19}><Scale /></Cell>
      <Cell $tone="dark" $w={70.5} $left $px={4}><Label>Global</Label><Push /><UpDown /></Cell>
    </Group>
    <Layers on ml={5.5} />
    <Layers ml={5.5} />
    <Group $ml={5.5}><Cell $tone="pressed" $w={18}><LockScene /></Cell></Group>
    <Group $ml={5}><Cell $tone="flat" $w={18}><Ring /></Cell></Group>
    <Group $ml={5}>
      <Cell $tone="flat" $w={18}><Magnet /></Cell>
      <Cell $tone="dark" $w={31.5}><Increment /><UpDown /></Cell>
      <Cell $tone="flat" $w={19}><GridSnap /></Cell>
    </Group>
    <Group $ml={5}><Cell $w={19}><Camera /></Cell><Cell $w={19}><ClapperEdge /></Cell></Group>
    <Hatch at="bl" />
  </Bar>
);

/* ---------- node editor ---------- */

const ORIGIN_X = 865;
const ORIGIN_Y = 27;

const Canvas = styled.div`
  position: relative;
  display: grid;
  grid-template: 946px 18px / 858px 16px;
  flex: none;
  width: 874px;
  height: 964px;
  background: #393939;
  box-shadow: inset 0 1px 0 #505050;
  font-family: "DejaVu Sans", sans-serif;
  font-stretch: normal;
  font-size: 12.4px;
  line-height: 16px;
`;
const Graph = styled.div`
  position: relative;
`;
const Wires = styled.svg`
  display: block;
  width: 858px;
  height: 946px;
`;
const VThumb = styled.div`
  width: 11px;
  height: 937px;
  margin: 6px 0 0 1px;
  border-radius: 6px;
  background: linear-gradient(90deg, #989898, #707070);
`;
const HTrack = styled.div`
  width: 848px;
  height: 12px;
  margin: 2px 0 0 5px;
  border-radius: 6px;
  background: #424242;
  box-shadow: 0 1px 0 #555;
`;
const HThumb = styled.div`
  width: 358px;
  height: 12px;
  border-radius: 6px;
  background: linear-gradient(#909090, #727272);
`;

type Box = { $x: number; $y: number; $w: number; $h: number };
const Node = styled.article<Box & { $body: string; $outline?: string; $pl: number; $pr: number }>`
  position: absolute;
  left: ${(p) => p.$x - ORIGIN_X}px;
  top: ${(p) => p.$y - ORIGIN_Y}px;
  width: ${(p) => p.$w}px;
  height: ${(p) => p.$h}px;
  display: flex;
  flex-direction: column;
  padding: 0 ${(p) => p.$pr}px 0 ${(p) => p.$pl}px;
  border-radius: 8px;
  background:
    linear-gradient(rgba(88, 88, 88, 0.95), rgba(75, 75, 75, 0.95)) 0 0 / 100% 23.6px no-repeat,
    linear-gradient(${(p) => p.$body}, ${(p) => p.$body}) 0 23.6px no-repeat;
  box-shadow: ${(p) => (p.$outline ? `inset 0 0 0 1.4px ${p.$outline},` : "inset 0 0 0 1px rgba(30,30,30,.35),")} 0 1px 6px rgba(0, 0, 0, 0.6);
`;
const NodeTitle = styled.h2<{ $c: string; $pl: number }>`
  display: flex;
  align-items: center;
  gap: 10.5px;
  flex: none;
  height: 23.6px;
  margin: 0 0 0 ${(p) => 6 - p.$pl}px;
  padding-top: 4px;
  font: inherit;
  &::before {
    content: "";
    border: 6.2px solid transparent;
    border-top: 11px solid ${(p) => p.$c};
    border-bottom: 0;
  }
`;
const PortRow = styled.div<{ $side: "in" | "out"; $h?: number; $mt?: number; $inset: number }>`
  position: relative;
  display: flex;
  align-items: center;
  justify-content: ${(p) => (p.$side === "in" ? "flex-start" : "flex-end")};
  flex: none;
  gap: 9px;
  height: ${(p) => p.$h || 25}px;
  margin-top: ${(p) => p.$mt || 0}px;
  padding: 0 ${(p) => (p.$side === "out" ? p.$inset : 0)}px 0 ${(p) => (p.$side === "in" ? p.$inset : 0)}px;
`;
const Port = styled.i<{ $side: "in" | "out"; $c: string; $out: number }>`
  position: absolute;
  top: calc(50% - 7.3px);
  ${(p) => (p.$side === "in" ? "left" : "right")}: ${(p) => -p.$out - 6}px;
  width: 12px;
  height: 12px;
  border-radius: 50%;
  border: 1px solid #1d1d1d;
  background: ${(p) => p.$c};
`;
const C = { verts: "#e59a33", edges: "#99ff99", matrix: "#33cccc", object: "#b4bfbf" };

const NumRow = styled.div`
  display: flex;
  align-items: center;
  flex: 1;
  min-width: 0;
  padding: 0 7px;
  background: linear-gradient(#9f9f9f, #b5b5b5);
`;
const Arrow = styled.i<{ $dir: "l" | "r" }>`
  flex: none;
  margin-bottom: 2px;
  border: 4.2px solid transparent;
  ${(p) => (p.$dir === "l" ? "border-right: 5.5px solid #767676; border-left: 0;" : "border-left: 5.5px solid #767676; border-right: 0;")}
`;
const NumText = styled.span<{ $gap?: number }>`
  padding: 3px ${(p) => p.$gap || 0}px 0;
`;
const NumStack = styled(Group)`
  flex-direction: column;
`;
const Num: React.FC<{ label: string; value: string; gap?: number }> = ({ label, value, gap = 6 }) => (
  <NumRow>
    <Arrow $dir="l" />
    <NumText $gap={gap}>{label}</NumText>
    <Push />
    <NumText $gap={gap + 1}>{value}</NumText>
    <Arrow $dir="r" />
  </NumRow>
);

const ListInput: React.FC<{
  x: number; y: number; h: number; pl: number; pr: number; outline?: string; active: string; values: string[];
}> = ({ x, y, h, pl, pr, outline, active, values }) => (
  <Node $x={x} $y={y} $w={166.7} $h={h} $pl={pl} $pr={pr} $body="rgba(95,95,95,.9)" $outline={outline}>
    <NodeTitle $c={outline ? "#b8511a" : "#3c3c3c"} $pl={pl}>List Input</NodeTitle>
    <PortRow $side="out" $mt={7.7} $inset={25 - pr}>
      List. 1
      <Port $side="out" $c={C.edges} $out={pr} />
    </PortRow>
    <NumStack $h={23.4} $mt={4.2} $r={12}><Num label="List Length:" value={String(values.length)} /></NumStack>
    <Group $h={23} $mt={6.2}>
      {["Int", "Float", "Vector"].map((t) => (
        <Cell key={t} $tone={t === active ? "active" : "dark"}><Label>{t}</Label></Cell>
      ))}
    </Group>
    <NumStack $h={values.length * 23.5} $mt={6.8} $r={10}>
      {values.map((v, i) => <Num key={i} label={i + ":"} value={v} />)}
    </NumStack>
  </Node>
);

const Contour: React.FC<{ weighted: boolean }> = ({ weighted }) => (
  <Node $x={1211.7} $y={310.7} $w={154.3} $h={250.3} $pl={13.5} $pr={12.5} $body="rgba(95,95,95,.9)">
    <NodeTitle $c="#3c3c3c" $pl={13.5}>Contour 2D</NodeTitle>
    <PortRow $side="out" $mt={7} $h={26} $inset={12.5}>Vertices. 3<Port $side="out" $c={C.verts} $out={12.5} /></PortRow>
    <PortRow $side="out" $h={26} $inset={12.5}>Edges. 3<Port $side="out" $c={C.edges} $out={12.5} /></PortRow>
    <Group $h={23.6} $mt={3.6}>
      <Cell $tone={weighted ? "dark" : "active"} $w={62.5}><Label>Constant</Label></Cell>
      <Cell $tone={weighted ? "active" : "dark"}><Label>Weighted</Label></Cell>
    </Group>
    <NumStack $h={23.6} $mt={6} $r={12}><Num label="R. Doubl:" value="0.00" gap={6} /></NumStack>
    <PortRow $side="in" $mt={7} $inset={9}>Distance. 1<Port $side="in" $c={C.edges} $out={13.5} /></PortRow>
    <PortRow $side="in" $inset={9}>Nº Vertices. 1<Port $side="in" $c={C.edges} $out={13.5} /></PortRow>
    <PortRow $side="in" $inset={9}>Verts_in. 1<Port $side="in" $c={C.verts} $out={13.5} /></PortRow>
    <PortRow $side="in" $inset={9}>Edges_in. 1<Port $side="in" $c={C.edges} $out={13.5} /></PortRow>
  </Node>
);

const SubRow = styled.div`
  display: flex;
  gap: 1px;
  flex: 1;
  min-height: 0;
`;
const PlainRow = styled.p`
  margin: 11.4px 0 0 8.6px;
`;
const ObjectsIn = () => (
  <Node $x={911.3} $y={602.7} $w={166.7} $h={295.3} $pl={13.4} $pr={11.7} $body="rgba(6,96,42,.97)">
    <NodeTitle $c="#3c3c3c" $pl={13.4}>Objects in mk3</NodeTitle>
    {([["Vertices. 1", C.verts], ["Edges. 1", C.edges], ["Polygons", C.edges], ["Matrixes", C.matrix], ["Object", C.object]] as const).map(([t, c], i) => (
      <PortRow key={t} $side="out" $mt={i ? 0 : 6} $inset={12.4}>{t}<Port $side="out" $c={c} $out={11.7} /></PortRow>
    ))}
    <Group $h={23} $mt={3.4} $r={4}><Cell $tone="field" $left $px={3}><Hand /></Cell></Group>
    <Group $h={23} $mt={1.6}><Cell><Label>Get selection</Label></Cell></Group>
    <NumStack $h={46} $mt={6.8} $edge="#1e2f24">
      <SubRow>
        <Cell $tone="pressed"><Label>Sort</Label></Cell>
        <Cell $tone="flat"><Label>Post</Label></Cell>
        <Cell $tone="flat"><Label>VeGr</Label></Cell>
      </SubRow>
      <SubRow><Cell><Label>Select Objects</Label></Cell></SubRow>
    </NumStack>
    <PlainRow>Plane</PlainRow>
  </Node>
);
const Swatch = styled.span<{ $c: string }>`
  flex: 1;
  background: ${(p) => p.$c};
`;
const Row = styled.div<{ $mt?: number; $gap?: number }>`
  display: flex;
  gap: ${(p) => p.$gap ?? 1.2}px;
  margin-top: ${(p) => p.$mt || 0}px;
`;
const Fill = styled.div`
  flex: 1;
  min-width: 0;
  display: grid;
`;
const ShowText = styled.span`
  flex: 1;
  padding: 3px 10px 0 0;
  text-align: center;
`;

const Viewer: React.FC<{ x: number; y: number; h: number; n: number; colors: string[] }> = ({ x, y, h, n, colors }) => (
  <Node $x={x} $y={y} $w={166.7} $h={h} $pl={13} $pr={12.3} $body="rgba(178,58,10,.98)">
    <NodeTitle $c="#3c3c3c" $pl={13}>Viewer Draw</NodeTitle>
    <Row $mt={6.4}>
      <Fill><Group $h={23.4} $edge="#4a2214"><Cell $tone="pressed" $left $px={5}><Eye /><ShowText>Show</ShowText></Cell></Group></Fill>
      <Group $h={23.4} $edge="#4a2214"><Cell $tone="flat" $w={20}><Ball s={18} /></Cell></Group>
      <Group $h={23.4} $edge="#4a2214"><Cell $tone="flat" $w={21} /></Group>
    </Row>
    <NumStack $h={70.4} $mt={6.6} $edge="#3a1a10">
      {colors.map((c, i) => (
        <SubRow key={i}>
          <Cell $tone="pressed" $w={21}><Cube c="#b5b5b5" mode={(["v", "e", "f"] as const)[i]} /></Cell>
          <Swatch $c={c} />
        </SubRow>
      ))}
    </NumStack>
    <Row $mt={6.6} $gap={7.6}>
      <Fill><Group $h={23.4} $edge="#4a2214"><Cell><Label>B A K E</Label></Cell></Group></Fill>
      <Group $h={23.4} $edge="#4a2214"><Cell $w={21}><Target /></Cell></Group>
    </Row>
    <PortRow $side="in" $mt={6.6} $inset={9}>vertices. {n}<Port $side="in" $c={C.verts} $out={13} /></PortRow>
    <PortRow $side="in" $inset={9}>edg_pol. {n}<Port $side="in" $c={C.edges} $out={13} /></PortRow>
    <PortRow $side="in" $inset={0}>
      <Group $h={22.6} $edge="#3a2a24"><Cell $w={20.4}><Plug /></Cell></Group>
      matrix
      <Port $side="in" $c={C.matrix} $out={13} />
    </PortRow>
  </Node>
);

const curve = (x0: number, y0: number, x1: number, y1: number) => {
  const h = (x1 - x0) / 2;
  return `M${x0} ${y0}C${x0 + h} ${y0} ${x1 - h} ${y1} ${x1} ${y1}`;
};
const links = [
  curve(1085.5, 410.3, 1211.7, 493.3),
  curve(1366, 352.7, 1480, 370.7),
  curve(1366, 379, 1480, 396),
  curve(1078, 644, 1211.7, 518.3),
  curve(1078, 669, 1211.7, 543.3),
  curve(1078, 644, 1149.3, 827.7),
  curve(1078, 669, 1149.3, 853),
];

const NodeCanvas: React.FC<{ weighted: boolean }> = ({ weighted }) => {
  const id = weighted ? "linkW" : "linkC";
  return (
    <Canvas>
      <Graph>
        <Wires viewBox="865 27 858 946">
          <defs>
            <linearGradient id={id} x1="0" y1="0" x2="0" y2="1">
              <stop offset="0" stopColor="#ffffff" />
              <stop offset="1" stopColor="#808080" />
            </linearGradient>
          </defs>
          <g shapeRendering="crispEdges">
            {range(0, 37, 1).map((i) => (
              <rect key={"v" + i} x={Math.round(883.2 + i * 23.76)} y="28" width="1" height="945" fill={i % 5 ? "#303030" : "#282828"} />
            ))}
            {range(1, 41, 1).map((i) => (
              <rect key={"h" + i} x="865" y={Math.round(16.2 + i * 23.76)} width="858" height="1" fill={i % 5 ? "#303030" : "#282828"} />
            ))}
          </g>
          {links.map((d) => (
            <g key={d} fill="none">
              <path d={d} stroke="#1e1e1e" strokeWidth="3.2" />
              <path d={d} stroke="#848484" strokeWidth="1.3" />
            </g>
          ))}
          <path d={curve(1080, 183, 1211.7, 468)} stroke="#1e1e1e" strokeWidth="3.2" fill="none" />
          <path d={curve(1080, 183, 1211.7, 468)} stroke={`url(#${id})`} strokeWidth="1.5" fill="none" />
        </Wires>
        <ListInput x={913.3} y={140.3} h={197.4} pl={14} pr={11.4} outline="#e0973a" active="Float" values={[weighted ? "1.08" : "0.90", "0.48", weighted ? "0.48" : "0.30"]} />
        <ListInput x={919} y={368.3} h={219.7} pl={12.3} pr={12.2} active="Int" values={weighted ? ["9", "8", "12", "28"] : ["4", "8", "12", "28"]} />
        <Contour weighted={weighted} />
        <ObjectsIn />
        <Viewer x={1149.3} y={649.7} h={245.7} n={1} colors={["#f8f9f3", "#f3d42a", "#e6f0e4"]} />
        <Viewer x={1480} y={192} h={246.6} n={3} colors={["#f8f9f3", "#bce0f2", "#32b8f4"]} />
        <RegionTab $side="l" />
      </Graph>
      <VThumb />
      <HTrack><HThumb /></HTrack>
    </Canvas>
  );
};

/* ---------- properties panel ---------- */

const Panel = styled.aside`
  position: relative;
  display: flex;
  flex-direction: column;
  flex: 1;
  background: #727272;
  border-left: 1px solid #5c5c5c;
  box-shadow: inset 0 1px 0 #858585;
  padding: 0 5px 0 5px;
`;
const PanelSection = styled.section<{ $h: number; $line?: boolean }>`
  flex: none;
  height: ${(p) => p.$h}px;
  border-top: ${(p) => (p.$line === false ? "0" : "1px solid #3c3c3c")};
  box-shadow: ${(p) => (p.$line === false ? "none" : "inset 0 1px 0 #8b8b8b")};
  padding: 0 3.3px;
`;
const PanelHead = styled.div`
  display: flex;
  align-items: center;
  gap: 4px;
  height: 24px;
  padding: 0 3px 1px 5px;
  margin-right: -2px;
`;
const HeadText = styled.h3<{ $tight?: boolean }>`
  margin: 0;
  font: 11px/14px "DejaVu Sans", sans-serif;
  font-stretch: normal;
  letter-spacing: ${(p) => (p.$tight ? "-0.4px" : "0")};
`;
const Fold = styled.i<{ $open?: boolean }>`
  flex: none;
  width: 8px;
  height: 8px;
  background: #222;
  clip-path: ${(p) => (p.$open ? "polygon(0 0, 100% 0, 50% 100%)" : "polygon(0 0, 100% 50%, 0 100%)")};
`;
const Grip = styled.i`
  flex: none;
  width: 11px;
  height: 5px;
  margin: 3px 0 0 -12px;
  background: radial-gradient(circle, #b5b5b5 0 0.8px, transparent 1.1px) 0 0 / 3px 3px;
`;
const Tick = styled.span`
  display: grid;
  flex: none;
  width: 14px;
  height: 14px;
  margin-right: 3px;
  border: 1px solid #2a2a2a;
  border-radius: 4px;
  background: linear-gradient(#3e3e3e, #555);
  overflow: visible;
`;
const CheckBox: React.FC<{ on?: boolean }> = ({ on }) => (
  <Tick>
    {on && (
      <Svg width="13" height="12" viewBox="0 0 13 12">
        <path d="M2.6 5L5 8.4L12.4 .4" fill="none" stroke="#ddd" strokeWidth="1.8" />
      </Svg>
    )}
  </Tick>
);
const Head: React.FC<{ t: string; open?: boolean; check?: boolean; tight?: boolean }> = ({ t, open, check, tight }) => (
  <PanelHead>
    <Fold $open={open} />
    {check !== undefined && <CheckBox on={check} />}
    <HeadText $tight={tight}>{t}</HeadText>
    <Push />
    <Grip />
  </PanelHead>
);
const FormRow = styled.div<{ $mt: number; $indent?: number }>`
  display: flex;
  align-items: center;
  height: 20px;
  margin-top: ${(p) => p.$mt}px;
  padding-left: ${(p) => p.$indent || 0}px;
  & > ${Group} { flex: 1; }
`;
const White = styled.span`
  color: #fff;
  padding: 2px 0 0 5px;
`;
const BakeBox = styled.div`
  display: grid;
  grid-template-rows: 24px 40px;
  height: 69px;
  margin-top: 5px;
  padding: 1px 4px;
  border: 1px solid #4a4a4a;
  border-radius: 5px;
  background: #7e7e7e;
`;
const Cols = styled.div`
  display: grid;
  grid-template-columns: 37px 22.6px 22.6px 22.6px 22.6px 22.6px;
  gap: 0.6px;
  align-items: center;
  justify-items: center;
  min-height: 0;
`;
const TreeRows = styled.div`
  display: grid;
  grid-template-columns: 37px 1fr;
`;
const TreeNames = styled.div`
  display: grid;
  grid-template-rows: 20px 20px;
`;
const TreeName = styled.span<{ $boxed?: boolean }>`
  padding: ${(p) => (p.$boxed ? "3px 0 0 1px" : "4px 0 0 7px")};
  border: ${(p) => (p.$boxed ? "1px solid #3a3a3a" : "0")};
  border-right: 0;
  border-radius: 4px 0 0 4px;
  background: ${(p) => (p.$boxed ? shade.field : "none")};
  overflow: hidden;
`;

const flags = (mid: Tone) => [
  { k: "B", tone: "tool" as Tone, c: <Label>B</Label> },
  { k: "eye", tone: "pressed" as Tone, c: <Eye s={14} /> },
  { k: "proc", tone: "pressed" as Tone, c: <Squiggle /> },
  { k: "P", tone: mid, c: <Label>P</Label> },
  { k: "F", tone: "pressed" as Tone, c: <Label>F</Label> },
];

const NodePanel = () => (
  <Panel>
    <PanelSection $h={195} $line={false}>
      <Head t="Node" open />
      <FormRow $mt={8}><Group><Cell $left $px={3}><Refresh /><Push /><Label>Reset Node</Label><Push /></Cell></Group></FormRow>
      <FormRow $mt={16} $indent={7}>
        <Item $w={51.7}>Name:</Item>
        <Group><Cell $tone="field" $left $px={4}><NodeField /><Label> List Input</Label></Cell></Group>
      </FormRow>
      <FormRow $mt={5} $indent={7}>
        <Item $w={51.7}>Label:</Item>
        <Group><Cell $tone="field" $left $px={4}><NodeField /></Cell></Group>
      </FormRow>
      <FormRow $mt={5}><Group><Cell><Label>SvListInputNode (copy)</Label></Cell></Group></FormRow>
      <FormRow $mt={5} $indent={7}>
        <Item $w={41}>help</Item>
        <Group>
          <Cell $w={46.5}><Label>online</Label></Cell>
          <Cell><Label>offline</Label></Cell>
          <Cell $w={18.5}><Copy /></Cell>
        </Group>
      </FormRow>
      <FormRow $mt={5} $indent={7}>
        <Item $w={75}>view source</Item>
        <Group><Cell><Label>external</Label></Cell></Group>
      </FormRow>
    </PanelSection>
    <PanelSection $h={24}><Head t="Color" check={false} /></PanelSection>
    <PanelSection $h={60}>
      <Head t="Properties" open />
      <FormRow $mt={8} $indent={3}><CheckBox on /><White>to3d</White></FormRow>
    </PanelSection>
    <PanelSection $h={85.5}>
      <Head t="Grease Pencil Layers" open check />
      <FormRow $mt={8}>
        <Group>
          <Cell $tone="dark" $w={30.5}><Pencil /><UpDown /></Cell>
          <Cell $left $px={3}><Plus /><Push /><Label>New</Label><Push /></Cell>
        </Group>
      </FormRow>
      <FormRow $mt={5}><Group><Cell><Label>New Layer</Label></Cell></Group></FormRow>
    </PanelSection>
    <PanelSection $h={40}><Head t="Grease Pencil Colors" open /></PanelSection>
    <PanelSection $h={24.2}><Head t="SV import/export" /></PanelSection>
    <PanelSection $h={240}>
      <Head t="SV 0.5.9.6 (d414c2e)" open tight />
      <Group $h={60} $mt={7.5}>
        <Cell $w={52.5}><Label>Update all</Label></Cell>
        <Cell><Label>Update NodeTree</Label></Cell>
      </Group>
      <BakeBox>
        <Cols>
          <Label>  Layou</Label><Label>B</Label><Eye s={14} /><Squiggle /><Label>P</Label><Label>F</Label>
        </Cols>
        <TreeRows>
          <TreeNames>
            <TreeName>Node</TreeName>
            <TreeName $boxed>NodeTr</TreeName>
          </TreeNames>
          <NumStack $h={40}>
            <SubRow>{flags("pressed").map((f) => <Cell key={f.k} $tone={f.tone}>{f.c}</Cell>)}</SubRow>
            <SubRow>{flags("flat").map((f) => <Cell key={f.k} $tone={f.tone}>{f.c}</Cell>)}</SubRow>
          </NumStack>
        </TreeRows>
      </BakeBox>
      <FormRow $mt={5.5}><Group><Cell><Label>Check for updates</Label></Cell></Group></FormRow>
      <FormRow $mt={5}><Group><Cell><Label>Show latest commits</Label></Cell></Group></FormRow>
    </PanelSection>
    <Hatch at="tr" />
  </Panel>
);

const NodeHeader = () => (
  <Bar $pad={8}>
    <Group><Cell $tone="dark" $w={30}><NodesIcon /><UpDown /></Cell></Group>
    <Item $ml={12.3} $w={45}>View</Item>
    <Item $w={51}>Select</Item>
    <Item $w={39}>Add</Item>
    <Item $w={39}>Node</Item>
    <Group>
      <Cell $tone="active" $w={18.6}><Snake /></Cell>
      <Cell $tone="dark" $w={19}><DotTree /></Cell>
      <Cell $tone="dark" $w={19}><Composite /></Cell>
      <Cell $tone="dark" $w={19}><Checker /></Cell>
      <Cell $tone="dark" $w={18.6}><MatBall /></Cell>
    </Group>
    <Group $ml={5}>
      <Cell $tone="dark" $w={30.4}><Snake /><UpDown /></Cell>
      <Cell $tone="field" $left $px={7} $w={118.6}><Label>NodeTree</Label></Cell>
      <Cell $tone="flat" $w={23}><Label>2</Label></Cell>
      <Cell $tone="pressed" $w={19}><Label>F</Label></Cell>
      <Cell $w={19.4}><Plus /></Cell>
      <Cell $w={18.6}><Cross /></Cell>
    </Group>
    <Group $ml={5.6}><Cell $tone="flat" $w={18}><Pin /></Cell></Group>
    <Group $ml={5.2} $edge="#555"><Cell $tone="flat" $w={18}><Parent /></Cell></Group>
    <Group $ml={16}><Cell $tone="pressed" $w={18}><Figure /></Cell></Group>
    <Group $ml={5.4}>
      <Cell $tone="flat" $w={18}><Magnet /></Cell>
      <Cell $tone="dark" $w={31}><GridSnap /><UpDown /></Cell>
    </Group>
    <Group $ml={5.4}><Cell $w={18}><Clip /></Cell><Cell $w={18.4}><Clip out /></Cell></Group>
    <Item $ml={9.5} $w={17}><Snake /></Item>
    <Item $ml={6}>Templates</Item>
    <Hatch at="bl" />
  </Bar>
);

const DataBlock: React.FC<{ icon: React.ReactNode; name: string; ml?: number }> = ({ icon, name, ml }) => (
  <Group $ml={ml}>
    <Cell $tone="dark" $w={31}>{icon}<UpDown /></Cell>
    <Cell $tone="field" $left $px={6} $w={118.6}><Label>{name}</Label></Cell>
    <Cell $w={19}><Plus /></Cell>
    <Cell $w={18.4}><Cross /></Cell>
  </Group>
);
const InfoBar = () => (
  <Bar $top $pad={8.5}>
    <Group><Cell $tone="dark" $w={30}><Info /><UpDown /></Cell></Group>
    <Item $ml={11.5} $w={38}>File</Item>
    <Item $w={55}>Render</Item>
    <Item $w={60}>Window</Item>
    <Item $w={36}>Help</Item>
    <DataBlock icon={<ScreenIcon />} name="Sverchok" />
    <DataBlock icon={<SceneIcon />} name="Scene" ml={5.5} />
    <Group $ml={16.5}><Cell $tone="dark" $w={114.5} $left $px={7}><Label>Cycles Render</Label><Push /><UpDown /></Cell></Group>
    <Item $ml={17}><Blender /></Item>
    <Stats $ml={8}>v2.79 | Verts:9 | Faces:0 | Tris:0 | Objects:0/3 | Lamps:0/1 | Mem:17.36M | Plane</Stats>
    <Hatch at="bl" />
    <Hatch at="tr" />
  </Bar>
);

const BlenderScreen: React.FC<{ weighted: boolean }> = ({ weighted }) => (
  <Screen>
    <InfoBar />
    <Main>
      <Column $w={864}>
        <View3D weighted={weighted} />
        <Header3D />
      </Column>
      <Split />
      <Column $w={1055}>
        <Main>
          <NodeCanvas weighted={weighted} />
          <NodePanel />
        </Main>
        <NodeHeader />
      </Column>
    </Main>
  </Screen>
);

export default function App() {
  return (
    <Page>
      <GlobalStyle />
      <BlenderScreen weighted={false} />
      <BlenderScreen weighted />
    </Page>
  );
}
